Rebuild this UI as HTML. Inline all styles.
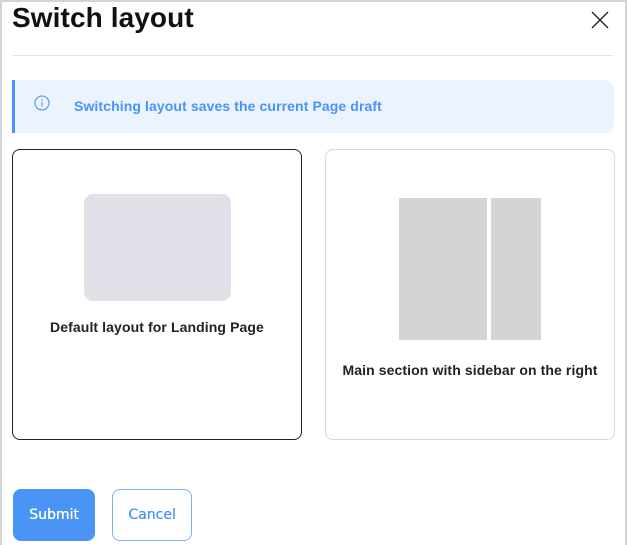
<!DOCTYPE html>
<html><head><style>
html,body{margin:0;padding:0;}
body{width:627px;height:543px;position:relative;background:#fff;font-family:"Liberation Sans",sans-serif;overflow:hidden;}
.frame{position:absolute;left:0;top:0;width:623px;height:543px;border:2px solid #d4d4d4;border-bottom:none;}
h1{position:absolute;left:12px;top:1px;margin:0;font-size:28px;font-weight:bold;color:#111;line-height:34px;letter-spacing:0.1px;}
.close{position:absolute;left:591px;top:11px;}
.hr{position:absolute;left:12px;top:55px;width:601px;height:1px;background:#e2e2e2;}
.alert{position:absolute;left:12px;top:80px;width:602px;height:53px;background:#ebf3fe;border-radius:0 10px 10px 0;border-left:3px solid #4a94f5;box-sizing:border-box;}
.alert span{position:absolute;left:59px;top:18px;font-size:14px;font-weight:bold;color:#4a94f5;letter-spacing:0.1px;}
.alert svg{position:absolute;left:19px;top:15px;}
.card{position:absolute;top:149px;width:290px;height:291px;box-sizing:border-box;border-radius:8px;background:#fff;}
.c1{left:12px;border:1px solid #222;}
.c2{left:325px;border:1px solid #d8d8d8;}
.lbl{position:absolute;left:0;width:100%;text-align:center;font-size:14px;font-weight:bold;color:#222;letter-spacing:0.1px;}
.btn{position:absolute;top:489px;height:52px;box-sizing:border-box;border-radius:8px;font-family:"DejaVu Sans",sans-serif;font-size:14px;text-align:center;line-height:50px;}
</style></head><body>
<div class="frame"></div>
<h1>Switch layout</h1>
<svg class="close" width="18" height="18" viewBox="0 0 18 18"><path d="M1 1L17 17M17 1L1 17" stroke="#222" stroke-width="1.4"/></svg>
<div class="hr"></div>
<div class="alert"><svg width="16" height="16" viewBox="0 0 16 16"><circle cx="8" cy="8" r="7" fill="none" stroke="#4a94f5" stroke-width="1.1"/><circle cx="8" cy="5" r="0.8" fill="#4a94f5"/><path d="M8 7v4.5" stroke="#4a94f5" stroke-width="1.1"/></svg><span>Switching layout saves the current Page draft</span></div>
<div class="card c1"><div style="position:absolute;left:71px;top:44px;width:147px;height:107px;background:#e1e0e8;border-radius:9px"></div><div class="lbl" style="top:169px">Default layout for Landing Page</div></div>
<div class="card c2"><div style="position:absolute;left:73px;top:48px;width:88px;height:142px;background:#d4d4d4"></div><div style="position:absolute;left:165px;top:48px;width:50px;height:142px;background:#d4d4d4"></div><div class="lbl" style="top:212px">Main section with sidebar on the right</div></div>
<div class="btn" style="left:13px;width:82px;background:#4a94f5;color:#fff;border:1px solid #4a94f5;text-shadow:0.3px 0 0 #fff">Submit</div>
<div class="btn" style="left:112px;width:80px;background:#fff;color:#4a94f5;border:1.5px solid #7fb0f5;text-shadow:0.3px 0 0 #4a94f5">Cancel</div>
</body></html>
